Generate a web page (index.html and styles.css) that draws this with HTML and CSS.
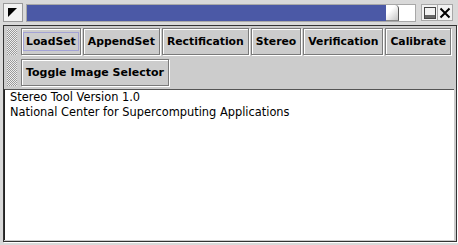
FILE: index.html
```html
<!DOCTYPE html>
<html lang="en">
<head>
  <meta charset="UTF-8">
  <title>Stereo Tool</title>
  <link rel="stylesheet" href="styles.css">
</head>
<body>

  <div class="window">

    <!-- TITLE BAR -->
    <div class="titlebar">
      <div class="menu-btn">
        <svg width="9" height="9" viewBox="0 0 9 9"><polygon points="0,0 9,0 0,9" fill="#000"/></svg>
      </div>
      <div class="title-track">
        <div class="title-fill"></div>
        <div class="title-thumb"></div>
      </div>
      <div class="win-btn min-btn">
        <svg width="12" height="12" viewBox="0 0 12 12">
          <rect x="0.5" y="0.5" width="11" height="11" fill="none" stroke="#444"/>
          <rect x="1" y="8" width="10" height="3" fill="#666"/>
        </svg>
      </div>
      <div class="win-btn">
        <svg width="12" height="12" viewBox="0 0 12 12">
          <path d="M1.5 1.5 L10.5 10.5 M10.5 1.5 L1.5 10.5" stroke="#000" stroke-width="2"/>
        </svg>
      </div>
    </div>

    <!-- MAIN FRAME -->
    <div class="frame">
      <div class="toolbar">
        <span class="grip"></span>
        <button class="tool-btn focused"><span>LoadSet</span></button>
        <button class="tool-btn"><span>AppendSet</span></button>
        <button class="tool-btn"><span>Rectification</span></button>
        <button class="tool-btn"><span>Stereo</span></button>
        <button class="tool-btn"><span>Verification</span></button>
        <button class="tool-btn"><span>Calibrate</span></button>
      </div>
      <div class="toolbar">
        <span class="grip"></span>
        <button class="tool-btn wide"><span>Toggle Image Selector</span></button>
      </div>
      <div class="text-area">
        <div>Stereo Tool Version 1.0</div>
        <div>National Center for Supercomputing Applications</div>
      </div>
    </div>

  </div>

</body>
</html>
```

FILE: styles.css
```css
body {
  margin: 0;
  background: #d9d9d9;
  font-family: "DejaVu Sans", sans-serif;
}
.window {
  width: 458px;
  height: 245px;
  display: flex;
  flex-direction: column;
}

/* title bar */
.titlebar {
  display: flex;
  align-items: center;
  height: 25px;
  padding: 0 0 0 3px;
  flex-shrink: 0;
}
.menu-btn {
  width: 20px;
  height: 19px;
  box-sizing: border-box;
  background: #f2f2f2;
  border: 1px solid #9a9a9a;
  padding: 4px 0 0 4px;
  margin-right: 3px;
}
.menu-btn svg { display: block; }
.title-track {
  width: 390px;
  height: 18px;
  box-sizing: border-box;
  display: flex;
  background: #fff;
  border: 1px solid #a8a8a8;
  margin-right: 5px;
}
.title-fill {
  width: 359px;
  background: #4b59a6;
}
.title-thumb {
  width: 13px;
  box-sizing: border-box;
  background: linear-gradient(135deg, #fff 35%, #c4c4c4);
  border-right: 1px solid #555;
  border-bottom: 1px solid #888;
  border-radius: 0 4px 0 0;
}
.win-btn {
  width: 16px;
  height: 17px;
  box-sizing: border-box;
  background: #f2f2f2;
  border: 1px solid #a8a8a8;
  display: flex;
  align-items: center;
  justify-content: center;
}
.min-btn { border-right: none; }
.win-btn svg { display: block; }

/* frame */
.frame {
  flex: 1;
  margin: 0 1px 3px 3px;
  border: 1px solid #333;
  box-shadow: 1px 1px 0 #fff;
  background: #cccccc;
  display: flex;
  flex-direction: column;
  padding-top: 2px;
}
.toolbar {
  display: flex;
  align-items: center;
  gap: 2px;
  height: 27px;
  margin-bottom: 4px;
  padding-left: 3px;
}
.grip {
  flex-shrink: 0;
  width: 10px;
  height: 26px;
  margin-right: 2px;
  background: repeating-conic-gradient(#999 0 25%, #eee 0 50%) 0 0 / 2px 2px;
}
.tool-btn {
  flex-shrink: 0;
  height: 27px;
  padding: 0 1px;
  background: #cccccc;
  border: 1px solid #7a7a7a;
  box-shadow: inset 1px 1px 0 #fff, 1px 1px 0 #fff;
  font-family: "DejaVu Sans", sans-serif;
  font-weight: bold;
  font-size: 10.85px;
  color: #000;
}
.tool-btn.wide { padding: 0 1px; font-size: 11px; }
.tool-btn span {
  display: block;
  padding: 2px 2px;
  border: 1px solid transparent;
}
.tool-btn.focused span { border-color: #a3a3d6; }

.text-area {
  flex: 1;
  background: #fff;
  margin: -1px 2px 1px 0;
  border-top: 1px solid #555;
  border-left: 1px solid #222;
  padding: 0 5px;
  font-size: 11.4px;
  line-height: 15px;
  color: #000;
}
```
